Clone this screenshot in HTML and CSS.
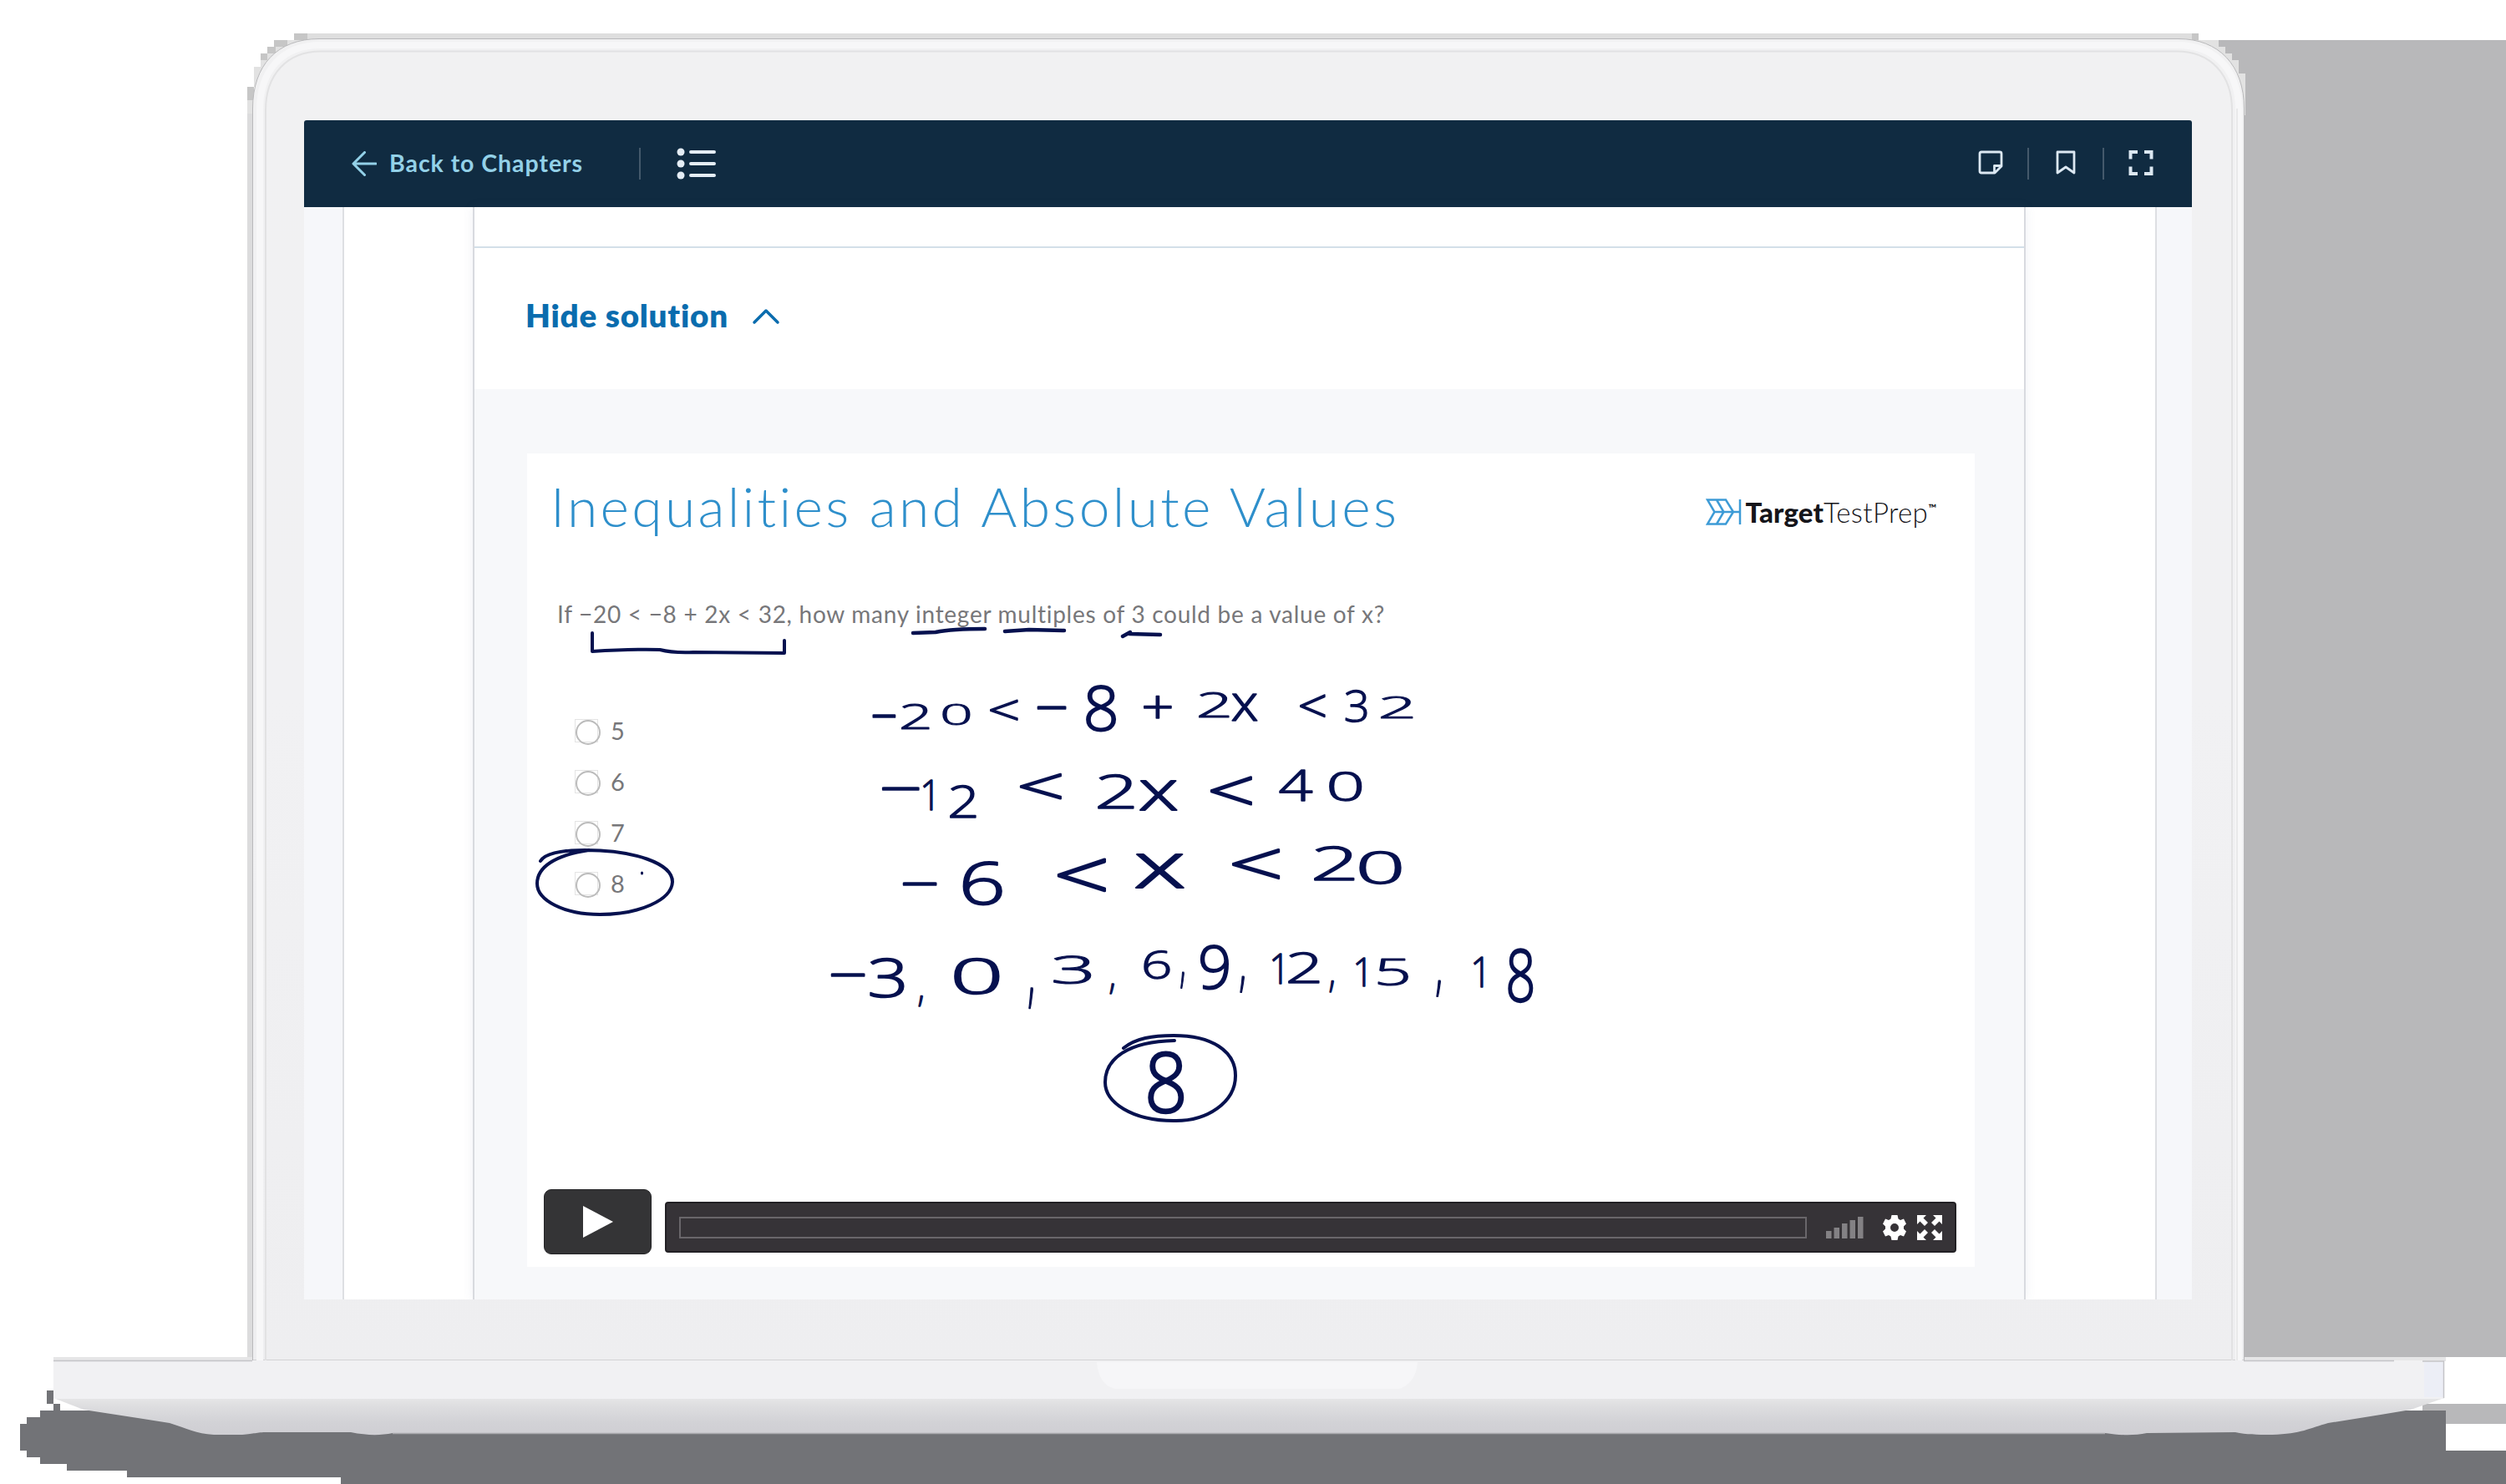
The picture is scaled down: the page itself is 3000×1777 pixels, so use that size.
FILE: index.html
```html
<!DOCTYPE html>
<html lang="en">
<head>
<meta charset="utf-8">
<title>Target Test Prep - Inequalities and Absolute Values</title>
<link rel="stylesheet" href="styles.css">
</head>
<body>
<div class="stage">
  <svg class="laptop" viewBox="0 0 3000 1777" aria-hidden="true">
    <defs>
      <linearGradient id="lid" x1="0" y1="0" x2="0" y2="1">
        <stop offset="0" stop-color="#f1f1f2"/><stop offset=".5" stop-color="#f1f1f3"/><stop offset="1" stop-color="#eeeef0"/>
      </linearGradient>
      <linearGradient id="lip" x1="0" y1="0" x2="0" y2="1">
        <stop offset="0" stop-color="#e6e6e7"/><stop offset=".2" stop-color="#dedee0"/><stop offset=".65" stop-color="#d2d2d6"/><stop offset="1" stop-color="#cfced3"/>
      </linearGradient>
    </defs>
    <path fill="#b8b8ba" d="M2620 48H3000V1625H2620z"/>
    <path fill="#b8b8ba" d="M2900 1681H3000V1705H2900z"/>
    <path fill="#727377" d="M56 1665H64V1681H72V1689H2928V1737H3000V1777H408V1769H152V1761H80V1753H48V1745H32V1737H24V1705H32V1697H48V1689H64V1681H56z"/>
    <path fill="#dedede" d="M352 40H2632V60H352z"/>
    <path fill="#c6c6c6" d="M352 40h16v8h-16zM328 48h16v8h-16zM320 56h10v8h-10zM312 64h8v8h-8zM296 104h8v16h-8zM2624 40h8v8h-8z"/>
    <path fill="#e2e2e2" d="M344 48h20v8h-20zM330 56h14v8h-14zM320 64h12v8h-12zM312 72h12v8h-12zM304 80h12v24h-12zM296 120h8v16h-8zM2632 48h24v8h-24zM2640 56h24v8h-24zM2650 64h22v8h-22zM2660 72h20v16h-20zM2670 88h18v50h-18z"/>
    <path fill="#dcdcdd" d="M296 136H303V1629H296z"/>
    <path fill="#e6e6e7" d="M64 1625H303V1629H64zM2686 1625H2928V1630H2686z"/>
    <path fill="url(#lid)" stroke="#b9b9bb" stroke-width="1" d="M302.500 1629V130C302.500 78 332 46.500 382 46.500H2608C2656 46.500 2686.500 78 2686.500 130V1629z"/>
    <path fill="none" stroke="#f7f7f8" stroke-width="8" d="M311 1629V132C311 84 338 54 384 54H2606C2652 54 2680 84 2680 132V1629"/>
    <path fill="none" stroke="#e2e2e3" stroke-width="2" d="M318 1629V132C318 90 343 61.500 384 61.500H2606C2647 61.500 2672 90 2672 132V1629"/>
    <path fill="none" stroke="#e4e4e6" stroke-width="1.500" d="M2678 130V1629"/>
    <path fill="url(#lip)" d="M64 1674L100 1688L165 1698L203 1704C225 1711 235 1717 258 1718H290C305 1717 306 1715 320 1715H420C440 1719 455 1719 470 1716H2520C2540 1719 2555 1719 2570 1716L2676 1715C2690 1718 2700 1718 2720 1718C2755 1717 2765 1710 2787 1704L2850 1694L2886 1688L2926 1674z"/>
    <path fill="none" stroke="#a9a9ad" stroke-width="1.500" d="M470 1716.500H2520"/>
    <path fill="#f1f1f3" d="M64 1629H2926V1675H64z"/>
    <path fill="#eceef6" d="M2902 1631H2925V1673H2902z"/>
    <path fill="none" stroke="#c4c4c7" stroke-width="1.500" d="M64 1629.500H302M2686 1629.500H2866M2900 1630H2925.500V1674"/>
    <path fill="#f6f6f8" d="M1313 1631H1697C1696 1645 1690 1658 1675 1663H1335C1320 1660 1314 1645 1313 1631z"/>
  </svg>

  <main class="screen">
    <header class="navbar">
      <a class="back">
        <svg class="back-arrow" viewBox="0 0 30 30"><path d="M15.500 1.500L2 15L15.500 28.500M2 15H29"/></svg>
        <span class="back-label">Back to Chapters</span>
      </a>
      <span class="rule rule-left"></span>
      <svg class="list-icon" viewBox="0 0 48 38"><g fill="#e4edf5" stroke="none"><circle cx="5" cy="5" r="4.500"/><circle cx="5" cy="19" r="4.500"/><circle cx="5" cy="33" r="4.500"/></g><path d="M17 5H45M17 19H45M17 33H45"/></svg>
      <span class="spacer"></span>
      <svg class="tool note" viewBox="0 0 30 30"><path d="M4 2H26Q28 2 28 4V19L20 27H4Q2 27 2 25V4Q2 2 4 2zM28 18.500H19.500V27"/></svg>
      <span class="rule"></span>
      <svg class="tool mark" viewBox="0 0 30 30"><path d="M5 2H25V27L15 20L5 27z"/></svg>
      <span class="rule"></span>
      <svg class="tool full" viewBox="0 0 30 30"><path d="M2.500 10.500V2H11M19 2H27.500V10.500M27.500 19.500V28H19M11 28H2.500V19.500"/></svg>
    </header>

    <div class="page">
      <article class="card">
        <div class="card-top"></div>
        <div class="toggle">
          <span class="toggle-label">Hide solution</span>
          <svg class="chevron" viewBox="0 0 34 20"><path d="M3 17L17 3L31 17"/></svg>
        </div>
        <div class="solution">
          <section class="video">
            <div class="video-head">
              <h1 class="title">Inequalities and Absolute Values</h1>
              <div class="brand">
                <svg class="brand-icon" viewBox="0 0 43 32"><path d="M2 1.500H24L33 16L24 30.500H2L10.500 16zM10.500 16H41M13 1.500L21.500 16L13 30.500M41 1V31"/></svg>
                <span class="brand-bold">Target</span><span class="brand-light">TestPrep</span><span class="brand-tm">™</span>
              </div>
            </div>
            <p class="question">If −20 &lt; −8 + 2x &lt; 32, how many integer multiples of 3 could be a value of x?</p>
            <ul class="options">
              <li><i class="radio"></i>5</li>
              <li><i class="radio"></i>6</li>
              <li><i class="radio"></i>7</li>
              <li><i class="radio"></i>8</li>
            </ul>
            <div class="player">
              <div class="play"><svg viewBox="0 0 36 38"><path d="M0 0L36 19L0 38z"/></svg></div>
              <div class="controls">
                <div class="progress"></div>
                <svg class="volume" viewBox="0 0 46 28"><path d="M0 18H6.500V27H0zM9.500 14H16V27H9.500zM19 9H25.500V27H19zM28.500 5H35V27H28.500zM38 1H44.500V27H38z"/></svg>
                <svg class="gear" viewBox="0 0 28 30"><path fill-rule="evenodd" d="M10.500 0H17.500L18.500 4.500L21 6L25 4.500L28 10.500L25 13.500V16.500L28 19.500L25 25.500L21 24L18.500 25.500L17.500 30H10.500L9.500 25.500L7 24L3 25.500L0 19.500L3 16.500V13.500L0 10.500L3 4.500L7 6L9.500 4.500zM14 10a5 5 0 1 0 0 10a5 5 0 1 0 0-10z"/></svg>
                <svg class="expand" viewBox="0 0 30 30"><path d="M0 0H11L7.500 3.500L13 9L9 13L3.500 7.500L0 11zM30 0V11L26.500 7.500L21 13L17 9L22.500 3.500L19 0zM0 30V19L3.500 22.500L9 17L13 21L7.500 26.500L11 30zM30 30H19L22.500 26.500L17 21L21 17L26.500 22.500L30 19z"/></svg>
              </div>
            </div>
            <svg class="ink" viewBox="631 543 1733 974">
              <g class="pen">
                <path d="M709 758V780Q760 777 790 778Q805 782 830 781L939 782V767"/>
                <path d="M1093 758L1120 757Q1140 753 1179 753" stroke-width="4.500"/>
                <path d="M1203 756L1232 754L1274 755" stroke-width="4.500"/>
                <path d="M1344 762L1353 757M1352 759L1389 760" stroke-width="4.500"/>
                <path d="M647 1031Q655 1018 700 1018C760 1018 805 1034 805 1056C804 1078 765 1095 718 1095C675 1095 643 1078 643 1058C643 1038 665 1024 705 1018"/>
                <path d="M1345 1255C1360 1243 1380 1240 1405 1240C1450 1240 1479 1258 1479 1288C1479 1320 1445 1343 1405 1342C1355 1342 1323 1320 1323 1296C1323 1268 1350 1247 1406 1246"/>
                <path d="M768.500 1045V1046" stroke-width="3"/>
              </g>
              <g id="handwriting" class="hand"></g>
            </svg>
          </section>
        </div>
      </article>
    </div>
  </main>
</div>
<script src="ink.js"></script>
</body>
</html>
```
FILE: styles.css
```css
* { box-sizing: border-box; }
body { margin: 0; background: #fff; font-family: Lato, "Liberation Sans", sans-serif; font-variant-ligatures: none; }
svg { display: block; flex: none; }
.stage { position: relative; width: 3000px; height: 1777px; overflow: hidden; padding: 144px 0 0 364px; }
.laptop { position: absolute; left: 0; top: 0; width: 3000px; height: 1777px; }
.screen { position: relative; width: 2260px; height: 1412px; background: #f6f7fa; display: flex; flex-direction: column; border-radius: 3px 3px 0 0; overflow: hidden; }

.navbar { height: 104px; flex: none; background: #102b41; display: flex; align-items: center; padding: 0 46px 0 57px; }
.back { display: flex; align-items: center; gap: 15px; color: #93d1e8; font-size: 28.500px; font-weight: 700; letter-spacing: .95px; width: 344px; white-space: nowrap; }
.back-label { padding-bottom: 3px; }
.back-arrow { width: 30px; height: 30px; fill: none; stroke: #93d1e8; stroke-width: 3; stroke-linecap: round; stroke-linejoin: round; }
.rule { width: 2px; height: 38px; background: #44596b; }
.rule-left { margin-right: 43px; }
.list-icon { width: 48px; height: 38px; fill: none; stroke: #e4edf5; stroke-width: 4; stroke-linecap: round; }
.spacer { flex: 1; }
.tool { width: 30px; height: 30px; margin-bottom: 3px; fill: none; stroke: #dce8f2; stroke-width: 2.800; stroke-linejoin: round; }
.note { margin-right: 29px; }
.mark { margin-left: 29px; margin-right: 29px; }
.full { margin-left: 29px; stroke-width: 4; stroke-linejoin: miter; }

.page { flex: 1; width: 2172px; margin-left: 46px; background: #fff; border: solid #dddfe3; border-width: 0 2px; }
.card { width: 1859px; height: 100%; margin-left: 154px; border: solid #d8dadf; border-width: 0 2px; box-shadow: 0 0 12px rgba(90, 110, 150, .10); background: #fff; display: flex; flex-direction: column; }
.card-top { height: 49px; border-bottom: 2px solid #d3dfe9; }
.toggle { height: 169px; display: flex; align-items: center; padding: 0 0 10px 61px; gap: 28px; color: #0a6cae; }
.toggle-label { font-size: 38.500px; font-weight: 800; line-height: 46px; letter-spacing: .8px; }
.chevron { width: 34px; height: 20px; margin-top: 5px; fill: none; stroke: #0a6cae; stroke-width: 3.500; stroke-linecap: round; stroke-linejoin: round; }
.solution { flex: 1; background: #f7f8fa; padding: 77px 59px 39px 63px; }

.video { position: relative; width: 1733px; height: 974px; background: #fff; padding: 0 22px 15px 20px; display: flex; flex-direction: column; }
.video-head { height: 140px; display: flex; justify-content: space-between; padding: 23px 24px 0 8px; }
.title { margin: 0; font-size: 66px; line-height: 80px; font-weight: 300; color: #2e8fcb; letter-spacing: 3.300px; white-space: nowrap; }
.brand { display: flex; height: 44px; margin-top: 25px; align-items: flex-start; color: #15151a; font-size: 33px; line-height: 44px; white-space: nowrap; }
.brand-icon { width: 43px; height: 32px; margin: 6px 5px 0 0; fill: none; stroke: #3d9bd6; stroke-width: 2.500; }
.brand-bold { font-weight: 900; letter-spacing: .1px; }
.brand-light { font-weight: 300; letter-spacing: .35px; }
.brand-tm { font-size: 13px; line-height: 26px; margin-top: 4px; font-weight: 700; }
.question { margin: 32px 0 0 16px; height: 40px; font-size: 28px; line-height: 40px; color: #77777a; letter-spacing: .72px; white-space: nowrap; }
.options { list-style: none; margin: 89px 0 0 37px; padding: 0; color: #77777a; font-size: 29px; }
.options li { height: 61px; display: flex; align-items: center; gap: 15px; }
.radio { width: 28px; height: 28px; border: 1px solid #e4e4e4; display: block; }
.radio::before { content: ""; display: block; width: 26px; height: 26px; border: 2px solid #bcbcbc; border-radius: 50%; }

.player { margin-top: auto; display: flex; gap: 16px; align-items: flex-end; }
.play { width: 129px; height: 78px; border-radius: 9px; background: #343436; border: 1px solid #242426; display: flex; align-items: center; justify-content: center; }
.play svg { width: 36px; height: 38px; fill: #fff; }
.controls { flex: 1; height: 61px; margin-bottom: 2px; border-radius: 4px; background: #363337; border: 2px solid #222024; display: flex; align-items: center; padding: 0 15px; }
.progress { width: 1350px; height: 26px; border: 2px solid #69666a; margin-right: 23px; }
.volume { width: 46px; height: 28px; fill: #838184; margin-right: 22px; }
.gear { width: 28px; height: 30px; fill: #fff; margin-right: 13px; }
.expand { width: 30px; height: 30px; fill: #fff; }

.ink { position: absolute; left: 0; top: 0; width: 1733px; height: 974px; }
.pen { fill: none; stroke: #06114f; stroke-width: 4; stroke-linecap: round; stroke-linejoin: round; }
.hand text { font-family: "Open Sans", sans-serif; font-weight: 300; font-size: 48px; fill: #06114f; stroke: #06114f; stroke-width: 1.300; stroke-linejoin: round; }
```
FILE: ink.js
```js
// Each mark of the worked solution: character, left, right, top, bottom.
const marks = [
  ["-",1044,1072,855,859],["2",1079,1113,842,873],["0",1128,1161,842,868],["<",1185,1218,837,862],["-",1241,1276,845,849],["8",1300,1336,821,875],["+",1369,1402,833,860],["2",1435,1472,828,859],["x",1475,1505,830,863],["<",1556,1586,832,859],["3",1611,1637,826,864],["2",1653,1692,833,860],
  ["-",1055,1100,942,946],["1",1105,1116,935,970],["2",1137,1169,940,979],["<",1221,1270,926,957],["2",1314,1358,928,968],["x",1365,1409,934,970],["<",1449,1498,930,964],["4",1532,1571,923,959],["0",1591,1630,924,959],
  ["-",1080,1121,1056,1060],["6",1154,1199,1032,1083],["<",1266,1323,1028,1068],["x",1360,1417,1022,1063],["<",1475,1531,1017,1053],["2",1573,1622,1014,1054],["0",1627,1677,1019,1058],
  ["-",994,1035,1165,1169],["3",1042,1083,1147,1194],[",",1099,1105,1191,1204],["0",1142,1196,1147,1190],[",",1231,1237,1183,1207],["3",1262,1307,1145,1178],[",",1328,1334,1178,1190],["6",1370,1400,1138,1172],[",",1413,1418,1163,1182],["9",1437,1471,1131,1184],[",",1484,1490,1168,1187],["1",1523,1534,1143,1178],["2",1542,1580,1141,1177],[",",1591,1597,1174,1188],["1",1623,1634,1147,1181],["5",1650,1686,1149,1180],[",",1719,1725,1173,1192],["1",1764,1775,1147,1182],["8",1805,1835,1136,1199],
  ["8",1374,1417,1260,1332]
];
const layer = document.getElementById("handwriting");
const pen = document.createElement("canvas").getContext("2d");
pen.font = '300 48px "Open Sans"';
for (const [char, left, right, top, bottom] of marks) {
  const box = pen.measureText(char);
  const sx = (right - left) / (box.actualBoundingBoxRight + box.actualBoundingBoxLeft);
  const sy = (bottom - top) / (box.actualBoundingBoxAscent + box.actualBoundingBoxDescent);
  const node = document.createElementNS("http://www.w3.org/2000/svg", "text");
  node.textContent = char;
  const x = left + box.actualBoundingBoxLeft * sx;
  const y = top + box.actualBoundingBoxAscent * sy;
  node.setAttribute("transform", `translate(${x} ${y}) scale(${sx} ${sy})`);
  layer.appendChild(node);
}
```
